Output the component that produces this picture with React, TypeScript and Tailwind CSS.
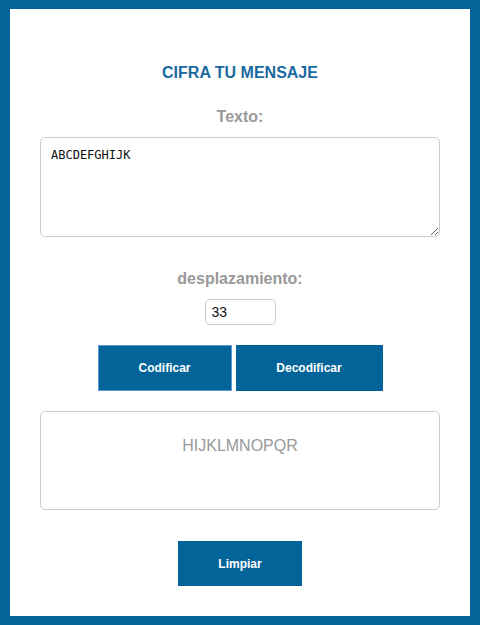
import React from "react";

export default function App() {
  return (
    <div className="h-[625px] w-[480px] bg-[#03649a] px-[10px] pt-[9px] pb-[9px] font-['Liberation_Sans',Arial,sans-serif]">
      <div className="flex h-full flex-col items-center bg-white">
        <h1 className="mt-[55px] text-[16px] leading-[18px] font-bold text-[#1a6aa0]">
          CIFRA TU MENSAJE
        </h1>
        <label className="mt-[26px] text-[16px] leading-[18px] font-bold text-[#999999]">
          Texto:
        </label>
        <textarea
          defaultValue="ABCDEFGHIJK"
          className="mt-[11px] h-[100px] w-[400px] rounded-[5px] border border-[#cccccc] bg-white p-[10px] font-['DejaVu_Sans_Mono',monospace] text-[12px] leading-[14px] text-[#111] outline-none"
        />
        <label className="mt-[33px] text-[16px] leading-[18px] font-bold text-[#999999]">
          desplazamiento:
        </label>
        <input
          type="text"
          defaultValue="33"
          className="mt-[11px] h-[26px] w-[71px] rounded-[5px] border border-[#cccccc] bg-white px-[6px] text-[14px] text-[#111] outline-none"
        />
        <div className="mt-[20px] flex gap-[4px]">
          <button className="h-[46px] w-[134px] border border-[#5a9ad4] bg-[#03649a] text-[12px] font-bold text-white">
            Codificar
          </button>
          <button className="h-[46px] w-[147px] bg-[#03649a] text-[12px] font-bold text-white">
            Decodificar
          </button>
        </div>
        <div className="mt-[20px] h-[99px] w-[400px] rounded-[5px] border border-[#cccccc] pt-[25px] text-center text-[16px] leading-[18px] text-[#999999]">
          HIJKLMNOPQR
        </div>
        <button className="mt-[31px] h-[45px] w-[124px] bg-[#03649a] text-[12px] font-bold text-white">
          Limpiar
        </button>
      </div>
    </div>
  );
}
